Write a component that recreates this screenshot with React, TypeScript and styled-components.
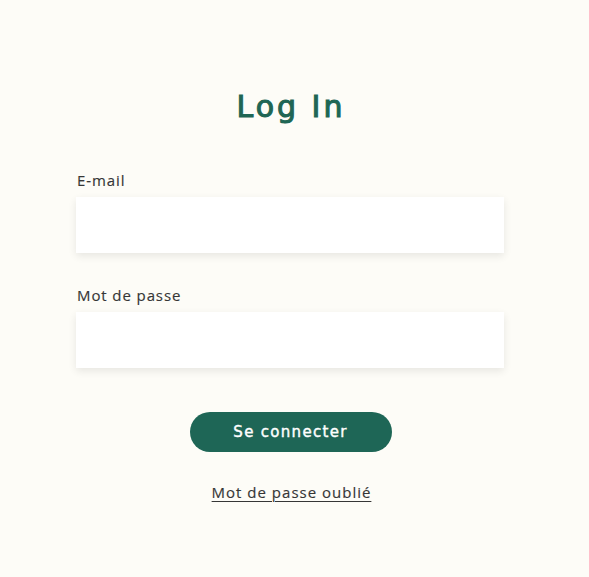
import React from "react";
import styled, { createGlobalStyle } from "styled-components";

const GlobalStyle = createGlobalStyle`
  html, body {
    margin: 0;
    padding: 0;
    background: #fdfcf7;
  }
  body {
    font-family: "Open Sans", "Liberation Sans", sans-serif;
  }
`;

const Page = styled.main`
  min-height: 577px;
  background: #fdfcf7;
  box-sizing: border-box;
  padding: 89px 0 0 76px;
`;

const Form = styled.form`
  width: 428px;
  display: flex;
  flex-direction: column;
`;

const Title = styled.h1`
  margin: 0 0 45px;
  font-family: "DejaVu Sans", sans-serif;
  font-weight: 400;
  font-size: 30px;
  line-height: 36px;
  letter-spacing: 3px;
  -webkit-text-stroke: 1.1px #1f6654;
  color: #1f6654;
  text-align: center;
  padding-left: 2px;
`;

const Field = styled.div<{ $gap?: number }>`
  display: flex;
  flex-direction: column;
  gap: 7px;
  margin-bottom: ${(p) => p.$gap ?? 0}px;
`;

const Label = styled.label`
  font-family: "Open Sans", sans-serif;
  font-size: 15px;
  line-height: 20px;
  letter-spacing: 0.9px;
  color: #363636;
  -webkit-text-stroke: 0.15px #363636;
  padding-left: 1px;
`;

const Input = styled.input`
  box-sizing: border-box;
  height: 56px;
  width: 100%;
  border: none;
  outline: none;
  background: #ffffff;
  box-shadow: 0 3px 8px rgba(0, 0, 0, 0.09);
  padding: 0 14px;
  font-family: "Open Sans", sans-serif;
  font-size: 15px;
`;

const Actions = styled.div`
  display: flex;
  flex-direction: column;
  align-items: center;
  gap: 30px;
  margin-top: 44px;
  padding-left: 1px;
`;

const Button = styled.button`
  width: 202px;
  height: 40px;
  border: none;
  border-radius: 20px;
  background: #1e6656;
  color: #ffffff;
  font-family: "DejaVu Sans", sans-serif;
  font-size: 15px;
  letter-spacing: 1.3px;
  -webkit-text-stroke: 0.4px #ffffff;
  cursor: pointer;
  padding: 0;
`;

const Link = styled.a`
  font-family: "Open Sans", sans-serif;
  font-size: 15px;
  line-height: 20px;
  letter-spacing: 1px;
  color: #363636;
  -webkit-text-stroke: 0.15px #363636;
  text-decoration: underline;
  text-underline-offset: 3px;
  text-decoration-thickness: 1px;
  margin-left: 2px;
`;

export default function App() {
  return (
    <>
      <GlobalStyle />
      <Page>
        <Form onSubmit={(e) => e.preventDefault()}>
          <Title>Log In</Title>
          <Field $gap={32}>
            <Label htmlFor="email">E-mail</Label>
            <Input id="email" type="email" />
          </Field>
          <Field>
            <Label htmlFor="password">Mot de passe</Label>
            <Input id="password" type="password" />
          </Field>
          <Actions>
            <Button type="submit">Se connecter</Button>
            <Link href="#">Mot de passe oublié</Link>
          </Actions>
        </Form>
      </Page>
    </>
  );
}
